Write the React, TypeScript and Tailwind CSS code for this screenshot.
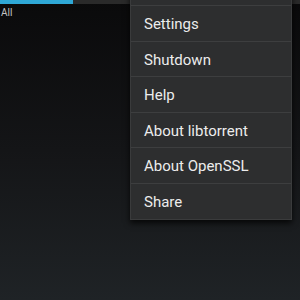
const items = ["Settings", "Shutdown", "Help", "About libtorrent", "About OpenSSL", "Share"];

const App = () => {
  return (
    <div
      className="relative w-[300px] h-[300px] overflow-hidden bg-gradient-to-b from-[#0a0a0b] via-[#141517] to-[#1f2326]"
      style={{ fontFamily: "Roboto, 'Noto Sans', sans-serif" }}
    >
      <div className="h-[4px] w-full bg-[#2a2a2a]">
        <div className="h-full w-[73px] bg-[#2fa8d6]" />
      </div>
      <div className="px-[1px] pt-[4px] text-[10px] leading-[10px] text-[#c4c4c4]">All</div>

      <div className="absolute left-[130px] top-[-30.5px] w-[162px] bg-[#2d2e2f] shadow-[0_3px_6px_rgba(0,0,0,0.8)] border border-[#3a3b3c]">
        <div className="h-[35.5px] border-b border-[#3d3e3f]" />
        {items.map((label, i) => (
          <div
            key={label}
            className={`h-[35.5px] flex items-center pl-[13px] pt-[2px] text-[15px] text-[#ececec] ${
              i < items.length - 1 ? "border-b border-[#3d3e3f]" : ""
            }`}
          >
            {label}
          </div>
        ))}
      </div>
    </div>
  );
};

export default App;
